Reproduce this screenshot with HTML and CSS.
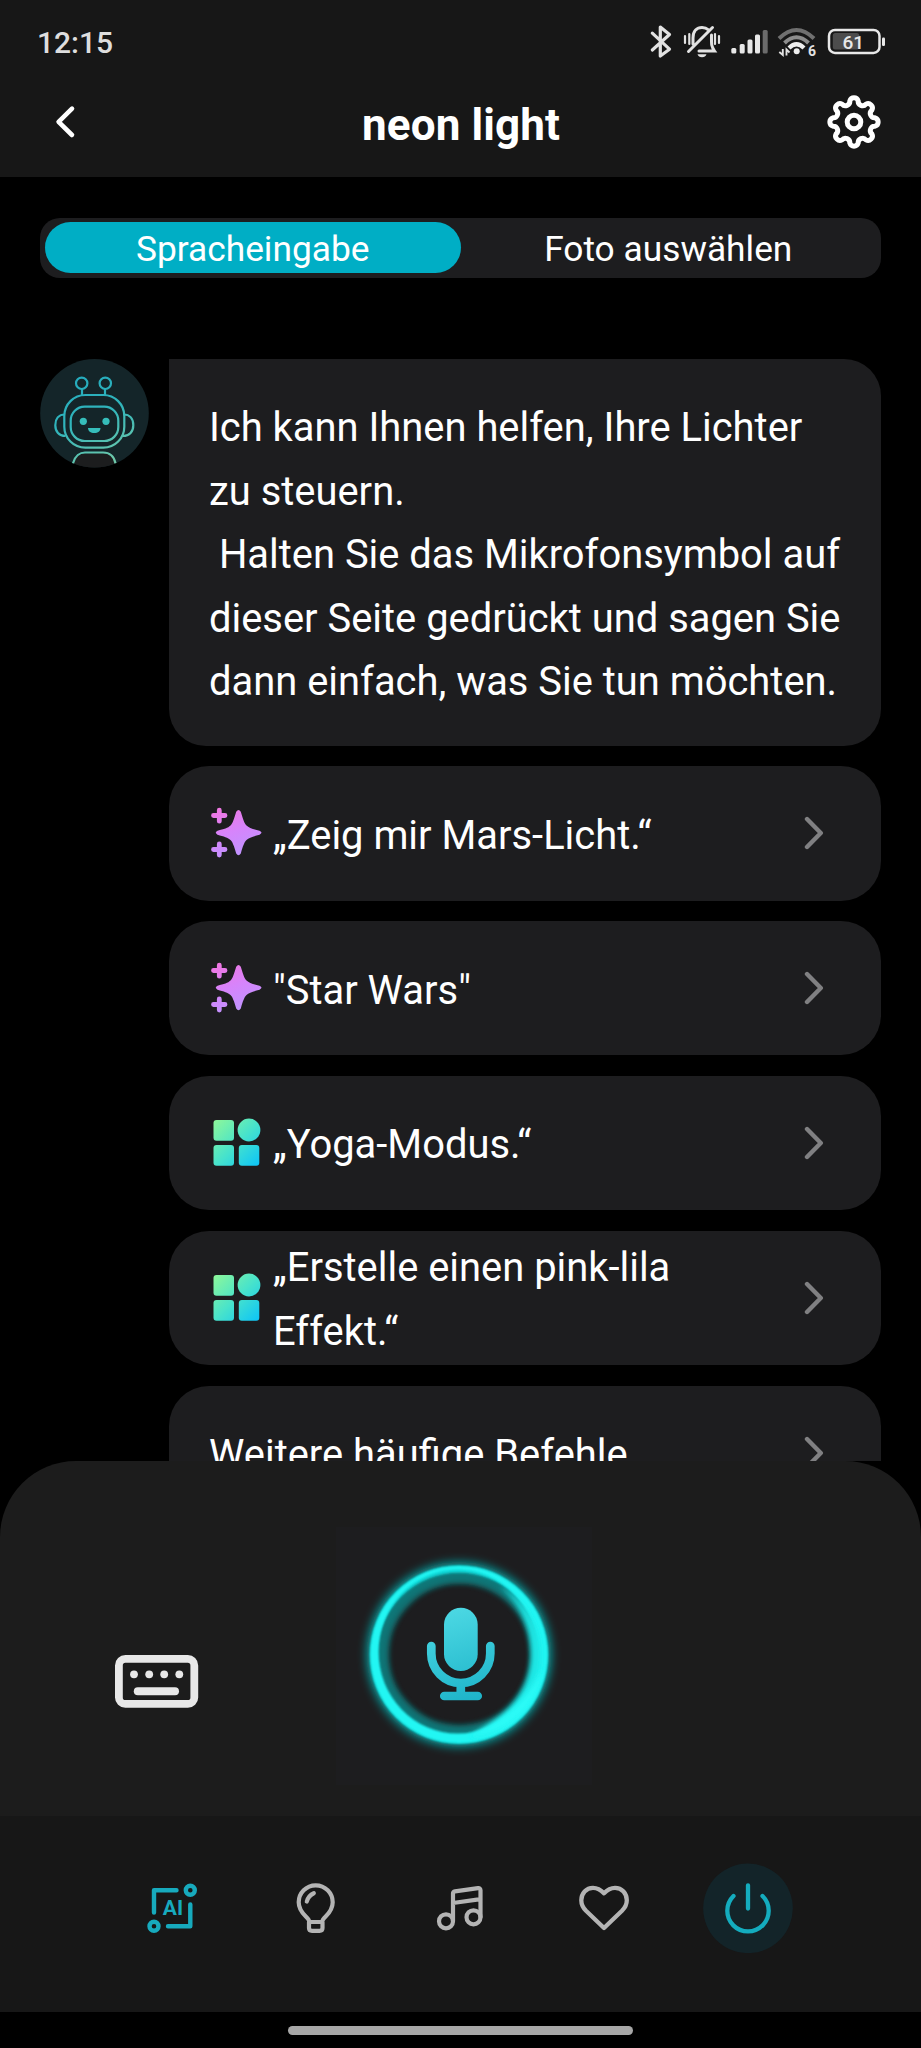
FILE: index.html
```html
<!DOCTYPE html>
<html lang="de">
<head>
<meta charset="utf-8">
<title>neon light</title>
<link rel="stylesheet" href="styles.css">
</head>
<body>
<svg class="defs" width="0" height="0" aria-hidden="true">
  <defs>
    <linearGradient id="pink" gradientUnits="userSpaceOnUse" x1="10" y1="0" x2="30" y2="54">
      <stop offset="0" stop-color="#f276e0"/><stop offset=".5" stop-color="#d684fb"/><stop offset="1" stop-color="#bd96ff"/>
    </linearGradient>
    <linearGradient id="mint" gradientUnits="userSpaceOnUse" x1="5" y1="5" x2="50" y2="50">
      <stop offset="0" stop-color="#8cf79b"/><stop offset=".5" stop-color="#48e3cb"/><stop offset="1" stop-color="#0cc4f8"/>
    </linearGradient>
    <symbol id="sparkle" viewBox="0 0 54 54">
      <g fill="none" stroke="url(#pink)" stroke-width="4.8" stroke-linecap="round">
        <path d="M4.500 9.500h11.500M10.300 4.200v11M4.500 43.500h11.500M10.300 38v11"/>
      </g>
      <path fill="url(#pink)" d="M27.200 5.800Q29.500 2.200 31.800 5.800C34 13 35 17 37.500 19.500C40 22 44 23 50.500 24.700Q54.500 26.500 50.500 28.700C44 30.500 40 31.500 37.500 34C35 36.500 34 40 31.800 47.500Q29.500 51 27.200 47.500C25 40 24 36.500 21.500 34C19 31.500 15 30.500 8.500 28.700Q5 26.500 8.500 24.700C15 23 19 22 21.500 19.500C24 17 25 13 27.200 5.800Z"/>
    </symbol>
    <symbol id="tiles" viewBox="0 0 54 54">
      <g fill="url(#mint)">
        <rect x="4.500" y="4" width="20.500" height="20.700" rx="3"/>
        <circle cx="40" cy="14" r="11.400"/>
        <rect x="4.500" y="29" width="20.500" height="20.700" rx="3"/>
        <rect x="29.800" y="29" width="20.500" height="20.700" rx="3"/>
      </g>
    </symbol>
    <symbol id="chevron" viewBox="0 0 20 34">
      <path d="M3 3l13.800 14L3 31" fill="none" stroke="#808082" stroke-width="4.400" stroke-linecap="round" stroke-linejoin="round"/>
    </symbol>
  </defs>
</svg>

<header class="header">
  <div class="status">
    <span class="clock">12:15</span>
    <div class="status-icons">
      <svg class="bt" viewBox="650 24 22 36"><path d="M652.300 33.200L669.500 49.200 660.300 56V27L669.500 34.500 652.300 50" fill="none" stroke="#e2e2e2" stroke-width="3.200" stroke-linejoin="round" stroke-linecap="round"/></svg>
      <svg class="bell" viewBox="682 24 40 36" fill="none" stroke="#e2e2e2" stroke-width="3" stroke-linecap="round">
        <path d="M693 44V38C693 31 697 27.500 702 27.500C705 27.500 707 28.500 708.500 29.800M711.500 35C711.500 44 711 46 714.500 51H699M688.500 51.500L712.500 27.500"/>
        <path d="M685 36v7M689.300 34v10M715 34v10M719 36v7" stroke-width="2.200"/>
        <path d="M697.500 54.300h9q-1 3-4.500 3t-4.500-3z" fill="#e2e2e2" stroke="none"/>
      </svg>
      <svg class="signal" viewBox="731 24 38 36"><g fill="#e8e8e8"><rect x="731.300" y="48" width="5" height="5.500" rx="1.500"/><rect x="739.700" y="44" width="5" height="9.500" rx="1.500"/><rect x="747.500" y="39.500" width="5" height="14" rx="1.500"/><rect x="755" y="34.500" width="5" height="19" rx="1.500"/></g><rect x="762.700" y="30" width="5" height="23.500" rx="1.500" fill="#6b6b6b"/></svg>
      <svg class="wifi" viewBox="777 24 40 36" fill="none">
        <path d="M779 38.500Q796.500 21.500 814 38.500" stroke="#707070" stroke-width="4"/>
        <path d="M784.500 43Q796.500 31.500 808.500 43" stroke="#8c8c8c" stroke-width="4"/>
        <path d="M789 48Q796.500 40.500 804 48" stroke="#ededed" stroke-width="4.200"/>
        <circle cx="796.700" cy="51.300" r="3" fill="#ededed"/>
        <path d="M782.800 49v6l-3.500-3M786.500 55.500v-6l3 3" stroke="#e2e2e2" stroke-width="1.900"/>
        <text class="wifi-num" x="808" y="55.500">6</text>
      </svg>
      <svg class="battery" viewBox="827 24 60 36">
        <rect x="829" y="29.900" width="50.500" height="23" rx="6" fill="none" stroke="#e8e8e8" stroke-width="2.500"/>
        <rect x="832.800" y="33" width="26.500" height="16.500" rx="2.500" fill="#4c4c4c"/>
        <rect x="882" y="37.500" width="3" height="8.500" rx="1.200" fill="#e8e8e8"/>
        <text class="battery-num" x="853.300" y="48.700">61</text>
      </svg>
    </div>
  </div>
  <div class="titlebar">
    <svg class="back" viewBox="0 0 22 36"><path d="M18 4.700L4.600 17.800 18 31" fill="none" stroke="#fff" stroke-width="4.600" stroke-linecap="round" stroke-linejoin="round"/></svg>
    <h1 class="title">neon light</h1>
    <svg class="gear" viewBox="-28 -28 56 56" fill="none" stroke="#fff" stroke-width="5" stroke-linejoin="round">
      <path d="M21.090-4.190A4.400 4.400 0 0 1 21.090 4.190A4.400 4.400 0 0 0 17.880 11.940A4.400 4.400 0 0 1 11.940 17.880A4.400 4.400 0 0 0 4.190 21.090A4.400 4.400 0 0 1-4.190 21.090A4.400 4.400 0 0 0-11.940 17.880A4.400 4.400 0 0 1-17.880 11.940A4.400 4.400 0 0 0-21.090 4.190A4.400 4.400 0 0 1-21.090-4.190A4.400 4.400 0 0 0-17.880-11.940A4.400 4.400 0 0 1-11.940-17.880A4.400 4.400 0 0 0-4.190-21.090A4.400 4.400 0 0 1 4.190-21.090A4.400 4.400 0 0 0 11.940-17.880A4.400 4.400 0 0 1 17.880-11.940A4.400 4.400 0 0 0 21.090-4.190Z"/>
      <circle r="6.800"/>
    </svg>
  </div>
</header>

<main class="content">
  <div class="tabs">
    <div class="tab tab-active">Spracheingabe</div>
    <div class="tab">Foto auswählen</div>
  </div>
  <section class="chat">
    <svg class="avatar" viewBox="0 0 109 109">
      <defs>
        <linearGradient id="bot" gradientUnits="userSpaceOnUse" x1="30" y1="15" x2="65" y2="105"><stop offset="0" stop-color="#23a9bd"/><stop offset=".5" stop-color="#31b5bb"/><stop offset="1" stop-color="#6fc9aa"/></linearGradient>
        <clipPath id="disc"><circle cx="54.500" cy="54.300" r="54.300"/></clipPath>
      </defs>
      <circle cx="54.500" cy="54.300" r="54.300" fill="#142529"/>
      <path clip-path="url(#disc)" d="M33 109V104C35 97 40 93.500 45 93.500H63C69 93.500 74 97 75.500 104V109Z" fill="#1c1d1e"/>
      <g fill="none" stroke="url(#bot)" stroke-width="2.200">
        <circle cx="41.700" cy="24.300" r="5.700"/><circle cx="65.300" cy="24.300" r="5.700"/>
        <path d="M42 30v6M65 30v6"/>
        <rect x="24.300" y="36" width="60" height="52.700" rx="21"/>
        <rect x="30.700" y="47.700" width="47.600" height="34.300" rx="14"/>
        <path d="M25 55.500C18.500 55.500 15.300 60 15.300 66.200S19 77 25.500 77M83.500 55.500C90 55.500 93.300 60 93.300 66.200S89.500 77 83 77"/>
        <path d="M33 104.300C35 97 40 93.500 45 93.500H63C69 93.500 74 97 75.500 104.300"/>
      </g>
      <g fill="#36bdba"><circle cx="43.300" cy="62.300" r="3.600"/><circle cx="66" cy="62.300" r="3.600"/><path d="M48 69H60.500C60.500 72 58 74 54.300 74S48 72 48 69Z"/></g>
    </svg>
    <div class="messages">
      <p class="bubble">Ich kann Ihnen helfen, Ihre Lichter<br>zu steuern.<br>&nbsp;Halten Sie das Mikrofonsymbol auf<br>dieser Seite gedrückt und sagen Sie<br>dann einfach, was Sie tun möchten.</p>
      <div class="card"><svg class="card-icon"><use href="#sparkle"/></svg><span class="card-text">„Zeig mir Mars-Licht.“</span><svg class="chev"><use href="#chevron"/></svg></div>
      <div class="card"><svg class="card-icon"><use href="#sparkle"/></svg><span class="card-text">"Star Wars"</span><svg class="chev"><use href="#chevron"/></svg></div>
      <div class="card"><svg class="card-icon"><use href="#tiles"/></svg><span class="card-text">„Yoga-Modus.“</span><svg class="chev"><use href="#chevron"/></svg></div>
      <div class="card"><svg class="card-icon"><use href="#tiles"/></svg><span class="card-text">„Erstelle einen pink-lila<br>Effekt.“</span><svg class="chev"><use href="#chevron"/></svg></div>
      <div class="card"><span class="card-text">Weitere häufige Befehle</span><svg class="chev"><use href="#chevron"/></svg></div>
    </div>
  </section>
</main>

<section class="panel">
  <svg class="keyboard" viewBox="0 0 84 54">
    <rect x="3.900" y="3.900" width="75.400" height="45" rx="6.500" fill="none" stroke="#e8e8e8" stroke-width="7.800"/>
    <g fill="#e8e8e8"><circle cx="19" cy="19.300" r="3.900"/><circle cx="34.200" cy="19.300" r="3.900"/><circle cx="49.200" cy="19.300" r="3.900"/><circle cx="64.300" cy="19.300" r="3.900"/><rect x="18.800" y="32.300" width="45.200" height="8" rx="4"/></g>
  </svg>
  <svg class="mic" viewBox="336 1527 256 258">
    <defs>
      <filter id="b1" x="-20%" y="-20%" width="140%" height="140%"><feGaussianBlur stdDeviation="1"/></filter>
      <filter id="b3" x="-20%" y="-20%" width="140%" height="140%"><feGaussianBlur stdDeviation="2.500"/></filter>
      <filter id="b6" x="-20%" y="-20%" width="140%" height="140%"><feGaussianBlur stdDeviation="5"/></filter>
      <linearGradient id="micfill" gradientUnits="userSpaceOnUse" x1="445" y1="1608" x2="475" y2="1700"><stop offset="0" stop-color="#4dd9e4"/><stop offset="1" stop-color="#1eb4c9"/></linearGradient>
    </defs>
    <rect x="336" y="1527" width="256" height="258" fill="#1d1d1f"/>
    <g fill="none">
      <circle cx="459" cy="1654.500" r="87" stroke="#0c9d9e" stroke-width="11" filter="url(#b6)"/>
      <circle cx="459.500" cy="1654.500" r="77.500" stroke="#0d8586" stroke-width="14" opacity=".8" filter="url(#b3)"/>
      <circle cx="459" cy="1654.700" r="85.500" stroke="#11d3d3" stroke-width="7" filter="url(#b1)"/>
    </g>
    <path filter="url(#b1)" fill="#22f6f3" fill-rule="evenodd" d="M370.500 1654.500A88.500 88.500 0 1 1 547.500 1654.500A88.500 88.500 0 1 1 370.500 1654.500ZM378.500 1651.500A79 82 0 1 0 536.500 1651.500A79 82 0 1 0 378.500 1651.500Z"/>
    <path filter="url(#b3)" fill="#1ee8e6" d="M500 1586C530 1603 541 1630 541 1654C541 1700 510 1735 470 1737C500 1723 531 1695 531 1654C531 1630 522 1606 500 1586Z"/>
    <path filter="url(#b3)" fill="#2bfbf7" d="M543 1668C538 1705 512 1735 470 1737C488 1722 520 1714 543 1668Z"/>
    <rect x="444" y="1607.700" width="33.700" height="63.300" rx="16.850" fill="url(#micfill)"/>
    <path d="M431.300 1646V1653.500A29.500 29.500 0 0 0 490.300 1653.500V1646M460.800 1683V1696M444.300 1696H477.700" fill="none" stroke="url(#micfill)" stroke-width="8.700" stroke-linecap="round"/>
  </svg>
</section>

<nav class="nav">
  <svg class="nav-item" viewBox="127 1863 90 90" fill="none" stroke="#17aabd" stroke-width="4.400" stroke-linecap="round" stroke-linejoin="round">
    <path d="M154 1912.500V1890.200H176.500M190.300 1904.500V1926.300H168"/>
    <circle cx="190.300" cy="1890.300" r="4.500"/><circle cx="154" cy="1926.300" r="4.500"/>
    <text class="ai" x="173" y="1914.800">AI</text>
  </svg>
  <svg class="nav-item" viewBox="271 1863 90 90" fill="none" stroke="#b4b4b4" stroke-width="4.200" stroke-linecap="round" stroke-linejoin="round">
    <path d="M309 1921C309 1917 298.700 1914 298.700 1902.300A17 17 0 0 1 332.700 1902.300C332.700 1914 322.500 1917 322.500 1921M309 1922H322.500V1928Q322.500 1930.800 319.500 1930.800H312Q309 1930.800 309 1928Z"/>
    <path d="M306.800 1901.500Q308.500 1895.500 313.800 1893.200"/>
  </svg>
  <svg class="nav-item" viewBox="415 1863 90 90" fill="none" stroke="#b4b4b4" stroke-width="4.200" stroke-linecap="round" stroke-linejoin="round">
    <circle cx="446" cy="1921.300" r="7"/><circle cx="473.500" cy="1917.300" r="7"/>
    <path d="M453 1921V1893.500Q453 1891.700 455 1891.300L478 1888.200Q480.500 1888 480.500 1890.200V1917M453 1903L480.500 1899.200"/>
  </svg>
  <svg class="nav-item" viewBox="559 1863 90 90" fill="none" stroke="#b4b4b4" stroke-width="4.300" stroke-linecap="round" stroke-linejoin="round">
    <path d="M604 1893.300C600.500 1889.500 597 1887.800 593 1887.800C586.200 1887.800 581.300 1893.500 581.300 1900.300C581.300 1904.500 583 1907.800 586 1910.800L604 1928L622 1910.800C625 1907.800 626.800 1904.500 626.800 1900.300C626.800 1893.500 622 1887.800 615 1887.800C611 1887.800 607.500 1889.500 604 1893.300Z"/>
  </svg>
  <svg class="nav-item" viewBox="703 1863 90 90" fill="none" stroke="#14acbe" stroke-width="4.300" stroke-linecap="round">
    <circle cx="748" cy="1908.300" r="44.800" fill="#132429" stroke="none"/>
    <path d="M733.500 1896A20.700 20.700 0 1 0 762.500 1896M748 1885.300V1908.500"/>
  </svg>
</nav>
<footer class="home"><div class="home-bar"></div></footer>
</body>
</html>
```
FILE: styles.css
```css
* { box-sizing: border-box; margin: 0; padding: 0; }
html { background: #000; }
body {
  width: 921px;
  height: 2048px;
  overflow: hidden;
  display: flex;
  flex-direction: column;
  background: #000;
  color: #fff;
  font-family: Roboto, "Noto Sans", sans-serif;
}
svg { display: block; flex: none; }
.defs { position: absolute; }

.header { height: 177px; flex: none; background: #171717; }
.status {
  display: flex;
  justify-content: space-between;
  height: 84px;
  padding: 24px 34px 0 37px;
}
.clock {
  font-size: 30px;
  line-height: 38px;
  font-weight: 500;
  color: #dedede;
}
.status-icons { display: flex; gap: 10px; }
.status-icons svg { height: 36px; }
.bt { width: 22px; }
.bell { width: 40px; }
.signal { width: 38px; margin-left: -1px; }
.wifi { width: 40px; margin-left: -2px; }
.battery { width: 60px; }
.wifi-num { font-size: 14px; font-weight: 700; fill: #e2e2e2; }
.battery-num { font-size: 19px; font-weight: 500; fill: #e8e8e8; text-anchor: middle; }

.titlebar {
  display: grid;
  grid-template-columns: 100px 1fr 100px;
  align-items: center;
  height: 76px;
  padding: 0 39px 0 54px;
}
.back { width: 22px; height: 36px; }
.title {
  text-align: center;
  font-size: 44px;
  line-height: 52px;
  font-weight: 700;
  letter-spacing: 0.1px;
  padding: 6px 14px 0 0;
}
.gear { width: 56px; height: 56px; justify-self: end; }

.content { height: 1284px; flex: none; padding: 41px 40px 0; overflow: hidden; }
.tabs {
  display: flex;
  height: 60px;
  padding: 4px 5px;
  border-radius: 20px;
  background: #1d1d1f;
}
.tab {
  flex: 1;
  height: 51px;
  border-radius: 25.5px;
  text-align: center;
  font-size: 35.3px;
  line-height: 55px;
}
.tab-active { background: #00aec5; }

.chat { display: flex; gap: 20px; margin-top: 81px; }
.avatar { width: 109px; height: 109px; }
.messages { width: 712px; display: flex; flex-direction: column; gap: 20.6px; }
.bubble {
  height: 386.8px;
  padding: 37px 40px 0;
  border-radius: 0 37px 37px 37px;
  background: #1d1d1f;
  font-size: 39.9px;
  line-height: 63.5px;
  white-space: nowrap;
}
.card {
  display: flex;
  align-items: center;
  flex: none;
  height: 134.2px;
  padding: 0 57px 0 40px;
  border-radius: 40px;
  background: #1d1d1f;
}
.card-icon { width: 54px; height: 54px; margin-right: 10px; }
.card-text { flex: 1; padding-top: 4px; font-size: 39.9px; line-height: 63.5px; white-space: nowrap; }
.chev { width: 20px; height: 34px; }

.panel {
  display: grid;
  grid-template-columns: 221px 256px;
  height: 355px;
  flex: none;
  padding: 66px 0 0 115px;
  border-radius: 76px 76px 0 0;
  background: #1c1c1c;
}
.keyboard { width: 84px; height: 54px; margin-top: 128px; }
.mic { width: 256px; height: 258px; }

.nav {
  display: flex;
  gap: 54px;
  height: 196px;
  flex: none;
  padding: 47px 0 0 127px;
  background: #171717;
}
.nav-item { width: 90px; height: 90px; }
.ai { font-size: 21px; font-weight: 700; fill: #17aabd; stroke: none; text-anchor: middle; }

.home { display: flex; justify-content: center; height: 36px; flex: none; padding-top: 14px; }
.home-bar { width: 345px; height: 8.6px; border-radius: 5px; background: #a7a7a7; }
```
